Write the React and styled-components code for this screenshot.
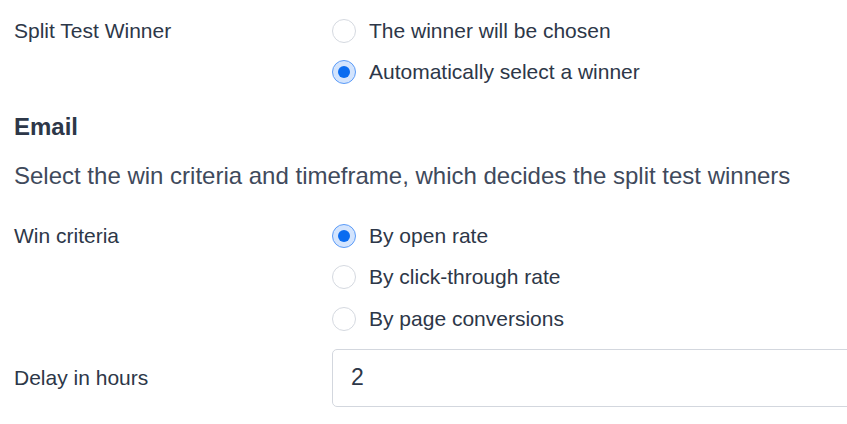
import styled, { createGlobalStyle } from "styled-components";

const GlobalStyle = createGlobalStyle`
  body {
    margin: 0;
    background: #fff;
    font-family: "Liberation Sans", Arial, sans-serif;
    color: #2d3748;
  }
`;

const Page = styled.div`
  padding: 10px 0 0 14px;
  overflow: hidden;
`;

const Row = styled.div`
  display: grid;
  grid-template-columns: 318px 1fr;
  align-items: start;
  margin-bottom: ${(p) => p.$gap || 0}px;
`;

const Label = styled.div`
  font-size: 21px;
  line-height: ${(p) => p.$lh || 42}px;
  color: #2d3748;
`;

const Options = styled.div`
  display: flex;
  flex-direction: column;
`;

const Option = styled.label`
  display: flex;
  align-items: center;
  gap: 13px;
  height: 41.5px;
  font-size: 21px;
  color: #2d3748;
  cursor: pointer;
`;

const Dot = styled.span`
  box-sizing: border-box;
  width: 24px;
  height: 24px;
  border-radius: 50%;
  flex-shrink: 0;
  border: 1px solid ${(p) => (p.$on ? "#5b9bf8" : "#d5d9e0")};
  background: ${(p) => (p.$on ? "#d3e4fd" : "#fff")};
  display: flex;
  align-items: center;
  justify-content: center;

  &::after {
    content: "";
    width: 12px;
    height: 12px;
    border-radius: 50%;
    background: #0a6cf0;
    display: ${(p) => (p.$on ? "block" : "none")};
  }
`;

const Heading = styled.h3`
  margin: 0;
  font-size: 24px;
  font-weight: bold;
  color: #2d3748;
  line-height: 41px;
`;

const Description = styled.p`
  margin: 0 0 11px;
  font-size: 24px;
  line-height: 57px;
  color: #3f4a5c;
`;

const Input = styled.input`
  box-sizing: border-box;
  width: 560px;
  height: 58px;
  padding: 0 18px;
  border: 1px solid #d3d7de;
  border-radius: 5px;
  font-family: inherit;
  font-size: 23px;
  color: #2d3748;
  outline: none;
`;

function Radio({ on, children }) {
  return (
    <Option>
      <Dot $on={on} />
      {children}
    </Option>
  );
}

export default function App() {
  return (
    <Page>
      <GlobalStyle />
      <Row $gap={13}>
        <Label>Split Test Winner</Label>
        <Options>
          <Radio>The winner will be chosen</Radio>
          <Radio on>Automatically select a winner</Radio>
        </Options>
      </Row>
      <Heading>Email</Heading>
      <Description>
        Select the win criteria and timeframe, which decides the split test
        winners
      </Description>
      <Row $gap={9}>
        <Label>Win criteria</Label>
        <Options>
          <Radio on>By open rate</Radio>
          <Radio>By click-through rate</Radio>
          <Radio>By page conversions</Radio>
        </Options>
      </Row>
      <Row>
        <Label $lh={58}>Delay in hours</Label>
        <Input defaultValue="2" />
      </Row>
    </Page>
  );
}
